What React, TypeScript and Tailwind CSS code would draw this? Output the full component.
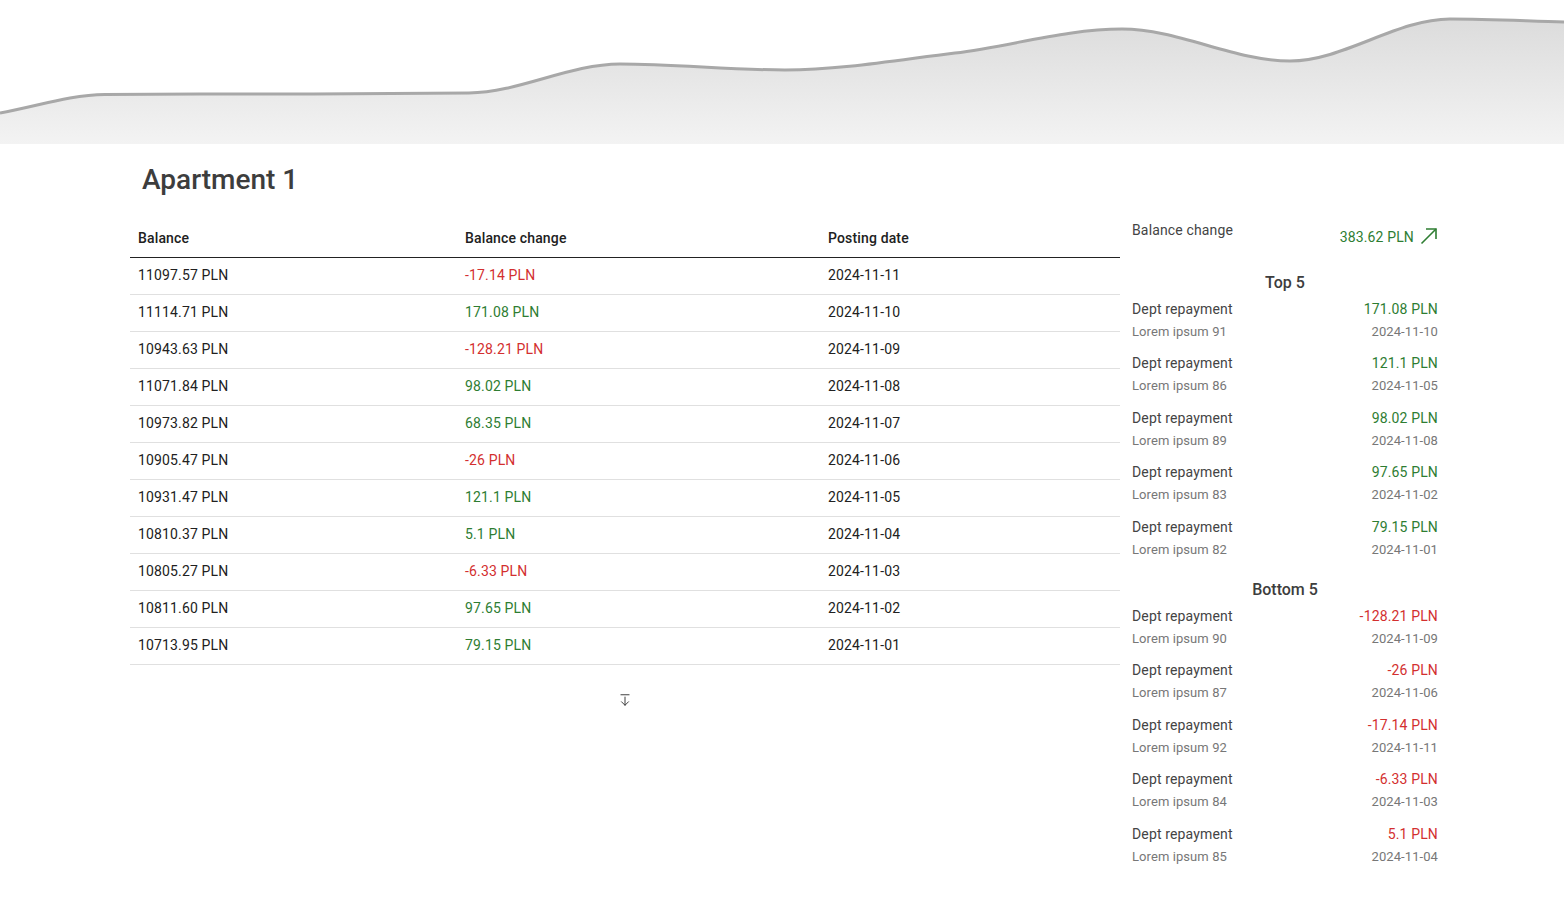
import React from "react";
import { ArrowDownFromLine } from "lucide-react";

type Pt = [number, number];

function monotonePath(pts: Pt[]): string {
  const n = pts.length;
  const dx: number[] = [];
  const m: number[] = [];
  for (let i = 0; i < n - 1; i++) {
    dx.push(pts[i + 1][0] - pts[i][0]);
    m.push((pts[i + 1][1] - pts[i][1]) / dx[i]);
  }
  const t: number[] = new Array(n).fill(0);
  t[0] = m[0];
  t[n - 1] = m[n - 2];
  for (let i = 1; i < n - 1; i++) {
    if (m[i - 1] * m[i] <= 0) t[i] = 0;
    else {
      const h0 = dx[i - 1];
      const h1 = dx[i];
      const p = (m[i - 1] * h1 + m[i] * h0) / (h0 + h1);
      t[i] =
        (Math.sign(m[i - 1]) + Math.sign(m[i])) *
        Math.min(Math.abs(m[i - 1]), Math.abs(m[i]), 0.5 * Math.abs(p));
    }
  }
  let d = `M${pts[0][0]},${pts[0][1]}`;
  for (let i = 0; i < n - 1; i++) {
    const [x0, y0] = pts[i];
    const [x1, y1] = pts[i + 1];
    const h = (x1 - x0) / 3;
    d += ` C${x0 + h},${y0 + h * t[i]} ${x1 - h},${y1 - h * t[i + 1]} ${x1},${y1}`;
  }
  return d;
}

const points: Pt[] = [
  [0, 113],
  [105, 94.5],
  [200, 94],
  [313, 94],
  [469, 93],
  [620, 64],
  [785, 70],
  [955, 53],
  [1122, 29],
  [1290, 61],
  [1450, 19],
  [1564, 22],
];

function Chart() {
  const line = monotonePath(points);
  const area = `${line} L1564,144 L0,144 Z`;
  return (
    <svg width="1564" height="144" viewBox="0 0 1564 144" className="block">
      <defs>
        <linearGradient id="g" x1="0" y1="0" x2="0" y2="144" gradientUnits="userSpaceOnUse">
          <stop offset="0" stopColor="#d8d8d8" />
          <stop offset="1" stopColor="#f3f3f3" />
        </linearGradient>
      </defs>
      <path d={area} fill="url(#g)" />
      <path d={line} fill="none" stroke="#a8a8a8" strokeWidth="3" />
    </svg>
  );
}

const rows = [
  ["11097.57 PLN", "-17.14 PLN", "2024-11-11"],
  ["11114.71 PLN", "171.08 PLN", "2024-11-10"],
  ["10943.63 PLN", "-128.21 PLN", "2024-11-09"],
  ["11071.84 PLN", "98.02 PLN", "2024-11-08"],
  ["10973.82 PLN", "68.35 PLN", "2024-11-07"],
  ["10905.47 PLN", "-26 PLN", "2024-11-06"],
  ["10931.47 PLN", "121.1 PLN", "2024-11-05"],
  ["10810.37 PLN", "5.1 PLN", "2024-11-04"],
  ["10805.27 PLN", "-6.33 PLN", "2024-11-03"],
  ["10811.60 PLN", "97.65 PLN", "2024-11-02"],
  ["10713.95 PLN", "79.15 PLN", "2024-11-01"],
];

const top5 = [
  ["171.08 PLN", "Lorem ipsum 91", "2024-11-10"],
  ["121.1 PLN", "Lorem ipsum 86", "2024-11-05"],
  ["98.02 PLN", "Lorem ipsum 89", "2024-11-08"],
  ["97.65 PLN", "Lorem ipsum 83", "2024-11-02"],
  ["79.15 PLN", "Lorem ipsum 82", "2024-11-01"],
];

const bottom5 = [
  ["-128.21 PLN", "Lorem ipsum 90", "2024-11-09"],
  ["-26 PLN", "Lorem ipsum 87", "2024-11-06"],
  ["-17.14 PLN", "Lorem ipsum 92", "2024-11-11"],
  ["-6.33 PLN", "Lorem ipsum 84", "2024-11-03"],
  ["5.1 PLN", "Lorem ipsum 85", "2024-11-04"],
];

function Item({ value, sub, date, red }: { value: string; sub: string; date: string; red: boolean }) {
  return (
    <div className="pt-[6px] pb-[5.4px]">
      <div className="flex justify-between text-[14px] leading-[20px] tracking-[0.15px]">
        <span className="text-[#444]">Dept repayment</span>
        <span className={red ? "text-[#d32f2f]" : "text-[#2e7d32]"}>{value}</span>
      </div>
      <div className="mt-[3px] flex justify-between text-[13px] leading-[20px] tracking-[0.08px] text-[#777]">
        <span>{sub}</span>
        <span>{date}</span>
      </div>
    </div>
  );
}

export default function App() {
  return (
    <div className="min-h-[900px] bg-white" style={{ fontFamily: "Roboto, 'Noto Sans', sans-serif" }}>
      <Chart />
      <div className="pl-[142px] pt-[18px]">
        <h1 className="text-[28px] leading-[36px] font-medium text-[#3d3d3d]">Apartment 1</h1>
      </div>
      <div className="mt-[21px] flex pl-[130px]">
        <div className="w-[990px] flex flex-col">
          <table className="table-fixed w-[990px] border-collapse text-[14px] tracking-[0.15px] text-[#212121]">
            <colgroup>
              <col className="w-[327px]" />
              <col className="w-[363px]" />
              <col className="w-[300px]" />
            </colgroup>
            <thead>
              <tr className="h-[38px] border-b border-[#222]">
                <th className="px-[8px] text-left font-medium pt-[1px]">Balance</th>
                <th className="px-[8px] text-left font-medium pt-[1px]">Balance change</th>
                <th className="px-[8px] text-left font-medium pt-[1px]">Posting date</th>
              </tr>
            </thead>
            <tbody>
              {rows.map((r, i) => (
                <tr key={i} className="h-[37px] border-b border-[#e0e0e0]">
                  <td className="px-[8px]">{r[0]}</td>
                  <td className={`px-[8px] ${r[1].startsWith("-") ? "text-[#d32f2f]" : "text-[#2e7d32]"}`}>{r[1]}</td>
                  <td className="px-[8px]">{r[2]}</td>
                </tr>
              ))}
            </tbody>
          </table>
          <div className="mt-[28px] flex justify-center">
            <ArrowDownFromLine size={14} strokeWidth={1.6} className="text-[#333]" />
          </div>
        </div>
        <div className="w-[318px] pl-[12px] pt-[1px]">
          <div className="flex justify-between h-[50px]">
            <span className="text-[14px] leading-[20px] tracking-[0.15px] text-[#444]">Balance change</span>
            <span className="flex items-center h-[34px] gap-[6px] text-[14px] tracking-[0.15px] text-[#2e7d32]">
              383.62 PLN
              <svg width="18" height="18" viewBox="0 0 18 18" className="-mt-[3px]" fill="none" stroke="currentColor" strokeWidth="1.6">
                <path d="M1.5 16.5 L16 2" />
                <path d="M6 2 H16 V12" />
              </svg>
            </span>
          </div>
          <div className="pt-[2px] text-center text-[16px] font-medium leading-[21px] text-[#3d3d3d]">Top 5</div>
          {top5.map((t, i) => (
            <Item key={i} value={t[0]} sub={t[1]} date={t[2]} red={false} />
          ))}
          <div className="mt-[12px] pt-[2px] text-center text-[16px] font-medium leading-[21px] text-[#3d3d3d]">Bottom 5</div>
          {bottom5.map((t, i) => (
            <Item key={i} value={t[0]} sub={t[1]} date={t[2]} red={true} />
          ))}
        </div>
      </div>
    </div>
  );
}
